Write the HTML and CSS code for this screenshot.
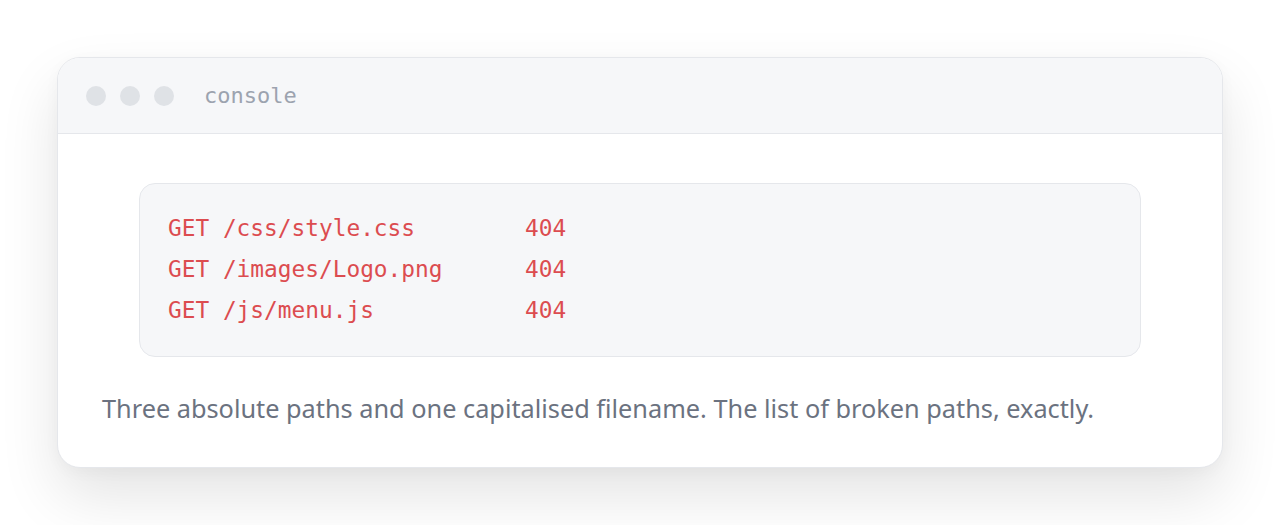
FILE: index.html
```html
<!DOCTYPE html>
<html lang="en">
<head>
<meta charset="utf-8">
<title>console</title>
<link rel="stylesheet" href="styles.css">
</head>
<body>
  <div class="window">
    <div class="titlebar">
      <div class="dots">
        <span class="dot"></span>
        <span class="dot"></span>
        <span class="dot"></span>
      </div>
      <span class="title">console</span>
    </div>
    <div class="content">
      <div class="log">
        <div class="row"><span class="req">GET /css/style.css</span><span class="status">404</span></div>
        <div class="row"><span class="req">GET /images/Logo.png</span><span class="status">404</span></div>
        <div class="row"><span class="req">GET /js/menu.js</span><span class="status">404</span></div>
      </div>
      <p class="caption">Three absolute paths and one capitalised filename. The list of broken paths, exactly.</p>
    </div>
  </div>
</body>
</html>
```

FILE: styles.css
```css
html, body {
  margin: 0;
  padding: 0;
  background: #ffffff;
}

body {
  padding: 57px;
  font-family: "Noto Sans", "Open Sans", sans-serif;
}

.window {
  background: #ffffff;
  border: 1px solid #e5e7eb;
  border-radius: 23px;
  overflow: hidden;
  box-shadow: 0 28px 60px rgba(0, 0, 0, 0.11), 0 4px 16px rgba(0, 0, 0, 0.03);
}

.titlebar {
  height: 75px;
  display: flex;
  align-items: center;
  padding: 0 28px;
  background: #f6f7f9;
  border-bottom: 1px solid #e5e7eb;
}

.dots {
  display: flex;
  gap: 14px;
}

.dot {
  width: 20px;
  height: 20px;
  border-radius: 50%;
  background: #dfe2e6;
}

.title {
  margin-left: 30px;
  font-family: "DejaVu Sans Mono", monospace;
  font-size: 22px;
  color: #9ca3af;
}

.content {
  padding: 49px 44px 39px;
}

.log {
  margin: 0 37px;
  padding: 24px 28px 25px;
  background: #f6f7f9;
  border: 1px solid #e5e7eb;
  border-radius: 16px;
  font-family: "DejaVu Sans Mono", monospace;
  font-size: 22.8px;
  line-height: 41px;
  color: #dc4c50;
}

.row {
  display: grid;
  grid-template-columns: 357px auto;
}

.caption {
  margin: 31px 0 0;
  font-size: 25.3px;
  line-height: 40px;
  color: #6b7280;
}
```
